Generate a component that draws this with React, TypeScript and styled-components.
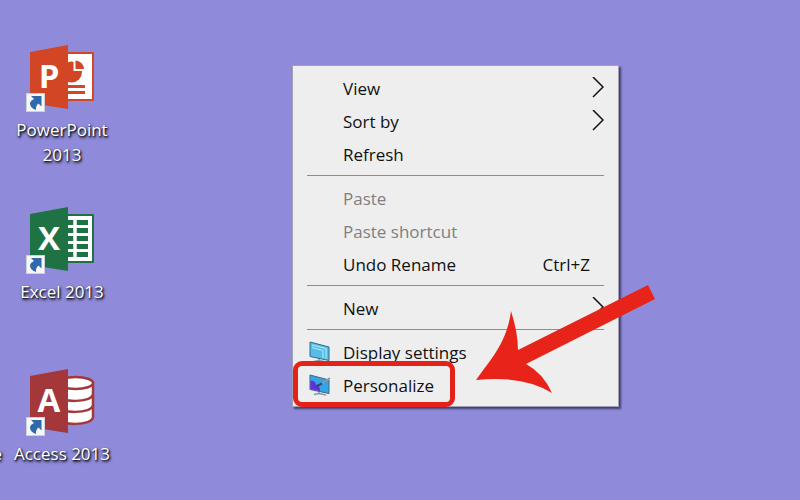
import React from "react";
import styled, { createGlobalStyle } from "styled-components";

const Global = createGlobalStyle`
  * { box-sizing: border-box; }
  body { margin: 0; background: #8f8bda; }
  button { font: inherit; border: 0; background: none; padding: 0; }
`;

const Desktop = styled.main`
  position: relative;
  min-height: 100vh;
  overflow: hidden;
  background: #8f8bda;
  font-family: "Open Sans", "Noto Sans", sans-serif;
  font-size: 17px;
`;

const IconGrid = styled.div`
  display: grid;
  grid-template-columns: 2px 120px;
  grid-auto-rows: 162px;
  padding-top: 43px;
  height: 100vh;
  overflow: hidden;
`;

const Shortcut = styled.button<{ $row: number }>`
  grid-column: 2;
  grid-row: ${(p) => p.$row};
  display: flex;
  flex-direction: column;
  align-items: center;
  gap: 4px;
`;

const ShortcutLabel = styled.span`
  color: #fff;
  line-height: 25px;
  text-align: center;
  text-shadow: 1px 1px 2px #000, 1px 2px 3px rgba(0, 0, 0, 0.7);
`;

const EdgeShortcut = styled.button`
  grid-column: 1;
  grid-row: 3;
  display: flex;
  justify-content: flex-end;
  padding-top: 74px;
`;

const Menu = styled.div`
  position: absolute;
  left: 292px;
  top: 65px;
  width: 327px;
  padding: 6px 0 4px;
  background: #eee;
  border: 1px solid #a3a2b4;
  box-shadow: 2px 2px 2px rgba(20, 20, 50, 0.65);
`;

const Item = styled.button`
  display: grid;
  grid-template-columns: 34px 1fr auto;
  align-items: center;
  width: 100%;
  height: 33px;
  padding: 0 14px 0 16px;
  color: #111;
  text-align: left;
  &:disabled { color: #808080; }
`;

const ItemLabel = styled.span`
  grid-column: 2;
`;

const Keys = styled.span`
  padding-right: 14px;
`;

const Divider = styled.hr`
  height: 1px;
  margin: 4px 14px 6px;
  border: 0;
  background: #8c8c8c;
`;

const Highlight = styled.div`
  position: absolute;
  left: 293px;
  top: 361px;
  width: 162px;
  height: 46px;
  border: 5px solid #e52219;
  border-radius: 9px;
  pointer-events: none;
`;

const Arrow = styled.svg`
  position: absolute;
  left: 470px;
  top: 280px;
  pointer-events: none;
`;

function AppIcon({ color, letter, page = true, children }: {
  color: string; letter: string; page?: boolean; children: React.ReactNode;
}) {
  return (
    <svg width="72" height="70" viewBox="0 0 72 70" aria-hidden="true">
      {page && <path d="M42 9H67Q68 9 68 10V57Q68 58 67 58H42Z" fill={color} />}
      {children}
      <path d="M4 9 42 2V66L4 60Z" fill={color} />
      <text x="23" y="45" textAnchor="middle" fill="#fff" fontFamily="Open Sans" fontWeight="700" fontSize="33">{letter}</text>
      <rect x="0.5" y="50.5" width="18" height="18" fill="#f7f7f7" stroke="#d0d0d8" />
      <path d="M5 53H15.500V63.500L12.500 60.500Q9.500 62.500 10 67Q3.500 64.500 4 60Q4.500 57.500 8 56Z" fill="#2f69ab" />
    </svg>
  );
}

const PieArt = () => (
  <>
    <path d="M42 11H66V56H42Z" fill="#fff" />
    <circle cx="45.500" cy="29" r="10.500" fill="#d24625" />
    <path d="M47.500 16V28H60V16Z" fill="#fff" />
    <path d="M49.500 17.500A9 9 0 0 1 58 26H49.500Z" fill="#d24625" />
    <path d="M42 42H59V45H42ZM42 48H59V51H42Z" fill="#d24625" />
  </>
);

const SheetArt = () => (
  <>
    <path d="M42 11H66V56H42Z" fill="#fff" />
    <path d="M42 17.500H62M42 25.500H62M42 33.500H62M42 41.500H62M42 49.500H62" stroke="#1f7244" strokeWidth="5" />
    <path d="M49 14V53" stroke="#fff" strokeWidth="3.500" />
  </>
);

const DatabaseArt = () => (
  <g fill="#fff" stroke="#a4373a" strokeWidth="2.500">
    <path d="M32 16V51C32 59 67 59 67 50V16Z" />
    <path d="M32 39C32 47 67 47 67 38M32 28C32 36 67 36 67 27" fill="none" />
    <ellipse cx="49.500" cy="16" rx="17.500" ry="6" />
  </g>
);

const Chevron = () => (
  <svg width="13" height="24" viewBox="0 0 13 24" fill="none" stroke="#111" strokeWidth="1.500" aria-hidden="true">
    <path d="M2 0 12 10 2 20" />
  </svg>
);

function Monitor({ painted }: { painted?: boolean }) {
  return (
    <svg width="22" height="24" viewBox="0 0 22 24" aria-hidden="true">
      <path d="M10 18V20M5 20.500 10 19.500 17 21" stroke="#8b979d" strokeWidth="1.500" fill="none" />
      <path d="M1 1 20 6V19.500L1 15.500Z" fill={painted ? "#35a4e6" : "#55bde8"} stroke="#356a87" />
      {painted ? (
        <>
          <path d="M1.500 7Q6 6 7 11Q11 11 11 17L1.500 15Z" fill="#6a2be0" />
          <path d="M21 4 13 9.500" stroke="#8d99a3" strokeWidth="2" />
          <path d="M13 9.500 7 12.500" stroke="#3a4468" strokeWidth="2" />
        </>
      ) : (
        <path d="M3 4 17 7.500V18M3 6.500 14 9.500V17" stroke="#b8edff" fill="none" />
      )}
    </svg>
  );
}

function MenuItem({ label, keys, submenu, disabled, icon }: {
  label: string; keys?: string; submenu?: boolean; disabled?: boolean; icon?: React.ReactNode;
}) {
  return (
    <Item role="menuitem" disabled={disabled}>
      {icon}
      <ItemLabel>{label}</ItemLabel>
      {keys && <Keys>{keys}</Keys>}
      {submenu && <Chevron />}
    </Item>
  );
}

export default function App() {
  return (
    <Desktop>
      <Global />
      <IconGrid>
        <Shortcut $row={1}>
          <AppIcon color="#d24625" letter="P"><PieArt /></AppIcon>
          <ShortcutLabel>PowerPoint<br />2013</ShortcutLabel>
        </Shortcut>
        <Shortcut $row={2}>
          <AppIcon color="#1f7244" letter="X"><SheetArt /></AppIcon>
          <ShortcutLabel>Excel 2013</ShortcutLabel>
        </Shortcut>
        <EdgeShortcut><ShortcutLabel>e</ShortcutLabel></EdgeShortcut>
        <Shortcut $row={3}>
          <AppIcon color="#a4373a" letter="A" page={false}><DatabaseArt /></AppIcon>
          <ShortcutLabel>Access 2013</ShortcutLabel>
        </Shortcut>
      </IconGrid>
      <Menu role="menu">
        <MenuItem label="View" submenu />
        <MenuItem label="Sort by" submenu />
        <MenuItem label="Refresh" />
        <Divider />
        <MenuItem label="Paste" disabled />
        <MenuItem label="Paste shortcut" disabled />
        <MenuItem label="Undo Rename" keys="Ctrl+Z" />
        <Divider />
        <MenuItem label="New" submenu />
        <Divider />
        <MenuItem label="Display settings" icon={<Monitor />} />
        <MenuItem label="Personalize" icon={<Monitor painted />} />
      </Menu>
      <Highlight />
      <Arrow width="190" height="120" viewBox="0 0 190 120" aria-hidden="true">
        <path d="M6 100C22 78 37 62 41 31Q48 53 48 70L178 5 185 19 56 84Q73 93 82 113Q54 95 6 100Z" fill="#e8231a" />
      </Arrow>
    </Desktop>
  );
}
